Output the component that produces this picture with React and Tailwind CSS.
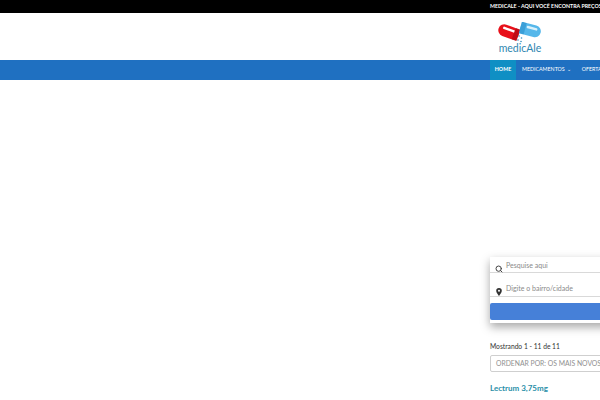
import { Search } from 'lucide-react';

function Logo() {
  return (
    <div className="flex flex-col items-center w-[46px]">
      <svg width="46" height="21" viewBox="0 0 46 21">
        <g transform="rotate(20 12 10)">
          <rect x="1" y="4" width="21" height="12" rx="6" fill="#e8101a" />
          <rect x="5" y="6.5" width="13" height="2.5" rx="1" fill="#ffffff" />
          <rect x="17" y="4" width="5" height="12" fill="#c00c14" />
        </g>
        <g transform="rotate(15 33 8)">
          <rect x="23" y="2" width="21" height="12" rx="6" fill="#55b7ea" />
          <rect x="23" y="2" width="5" height="12" fill="#3a9fd8" />
          <rect x="29" y="4.5" width="11" height="2.5" rx="1" fill="#d8f1fc" />
        </g>
        <circle cx="22" cy="14" r="0.8" fill="#3a8fc0" />
        <circle cx="24.5" cy="16" r="0.8" fill="#3a8fc0" />
        <circle cx="21" cy="18" r="0.8" fill="#3a8fc0" />
        <circle cx="24" cy="19.5" r="0.8" fill="#3a8fc0" />
      </svg>
      <span className="text-[10.5px] leading-[11px] text-[#2f86b0]">medicAle</span>
    </div>
  );
}

function Pin() {
  return (
    <svg width="8" height="8" viewBox="0 0 8 8">
      <path d="M4 0a2.8 2.8 0 0 0-2.8 2.8C1.2 4.8 4 8 4 8s2.8-3.2 2.8-5.2A2.8 2.8 0 0 0 4 0z" fill="#333" />
      <circle cx="4" cy="2.8" r="1" fill="#fff" />
    </svg>
  );
}

function Field({ icon, text, height }) {
  return (
    <div className={`flex items-start pl-[5px] gap-[3px] border-b border-[#d9d9d9] ${height}`}>
      <div className="w-[8px] h-[8px] mt-[8px] shrink-0">{icon}</div>
      <span className="text-[7px] leading-[9px] mt-[4px] text-[#8a8a8a]">{text}</span>
    </div>
  );
}

export default function App() {
  return (
    <div className="w-[600px] h-[400px] overflow-hidden bg-white font-['Lato','Noto_Sans',sans-serif]">
      <div className="h-[13px] bg-black pl-[490px] whitespace-nowrap text-[5.3px] leading-[13px] font-bold text-white">
        MEDICALE - AQUI VOCÊ ENCONTRA PREÇOS
      </div>
      <div className="h-[47px] pl-[497px] pt-[9px]">
        <Logo />
      </div>
      <nav className="h-[20px] bg-[#1f70c1] pl-[490px] flex items-stretch whitespace-nowrap text-[5.3px] text-white">
        <div className="w-[26px] shrink-0 bg-[#0f8fc4] flex items-center justify-center font-bold">HOME</div>
        <div className="shrink-0 flex items-center pl-[6px]">MEDICAMENTOS <span className="ml-[2px] text-[5px]">⌄</span></div>
        <div className="shrink-0 flex items-center pl-[11px]">OFERTAS</div>
      </nav>
      <div className="pl-[490px] pt-[177px] w-[900px]">
        <div className="w-[300px] h-[66px] bg-white shadow-[0_4px_9px_rgba(0,0,0,0.35)]">
          <Field height="h-[16px]" icon={<Search size={8} className="text-[#444]" strokeWidth={3} />} text="Pesquise aqui" />
          <div className="h-[7px]" />
          <Field height="h-[17px]" icon={<Pin />} text="Digite o bairro/cidade" />
          <div className="h-[6px]" />
          <div className="h-[17px] bg-[#4680d8] rounded-[2px]" />
        </div>
        <p className="mt-[19px] text-[6.7px] leading-[8px] text-[#333]">Mostrando 1 - 11 de 11</p>
        <div className="mt-[5px] w-[300px] h-[17px] border border-[#cfcfcf] rounded-[2px] pl-[5px] flex items-center text-[6.8px] text-[#8f8f8f] whitespace-nowrap">
          ORDENAR POR: OS MAIS NOVOS
        </div>
        <p className="mt-[11px] text-[8px] leading-[10px] font-bold text-[#2a8fa8]">Lectrum 3,75mg</p>
      </div>
    </div>
  );
}
